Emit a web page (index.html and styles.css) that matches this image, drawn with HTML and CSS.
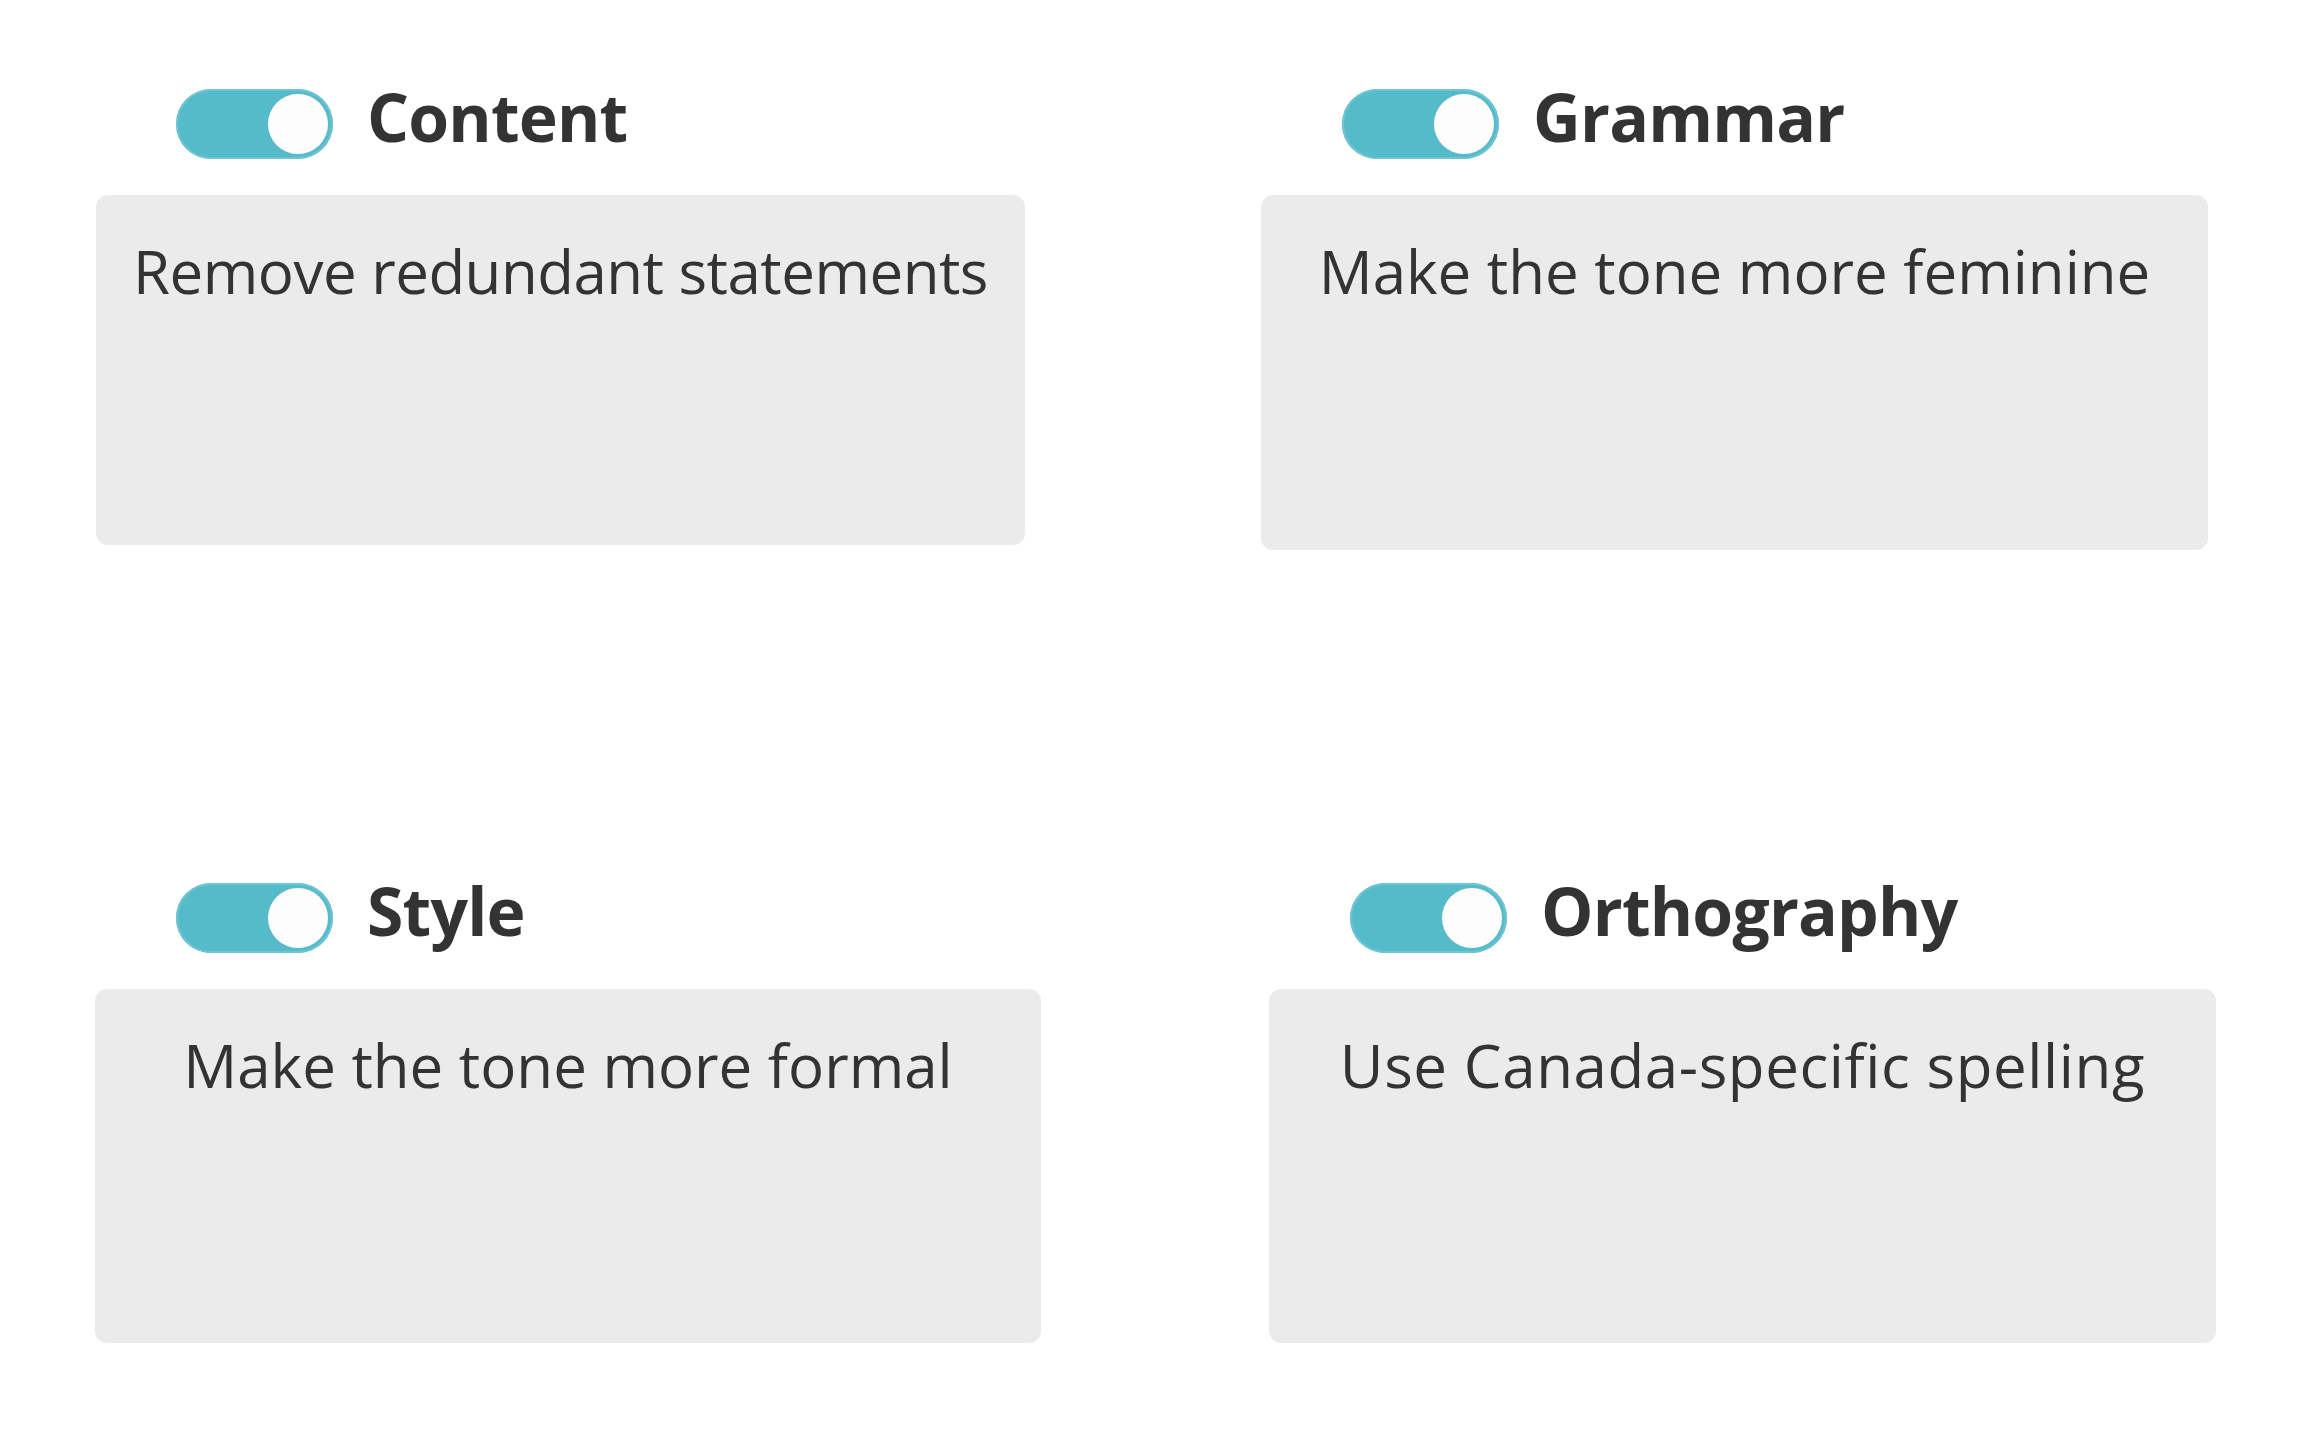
FILE: index.html
```html
<!DOCTYPE html>
<html lang="en">
<head>
<meta charset="utf-8">
<title>Rewrite options</title>
<link rel="stylesheet" href="styles.css">
</head>
<body>
<main class="board">
  <section class="card card--content">
    <header class="card-head">
      <span class="toggle" role="switch" aria-checked="true"><span class="knob"></span></span>
      <h2 class="label">Content</h2>
    </header>
    <div class="prompt">Remove redundant statements</div>
  </section>
  <section class="card card--grammar">
    <header class="card-head">
      <span class="toggle" role="switch" aria-checked="true"><span class="knob"></span></span>
      <h2 class="label">Grammar</h2>
    </header>
    <div class="prompt">Make the tone more feminine</div>
  </section>
  <section class="card card--style">
    <header class="card-head">
      <span class="toggle" role="switch" aria-checked="true"><span class="knob"></span></span>
      <h2 class="label">Style</h2>
    </header>
    <div class="prompt">Make the tone more formal</div>
  </section>
  <section class="card card--ortho">
    <header class="card-head">
      <span class="toggle" role="switch" aria-checked="true"><span class="knob"></span></span>
      <h2 class="label">Orthography</h2>
    </header>
    <div class="prompt">Use Canada-specific spelling</div>
  </section>
</main>
</body>
</html>
```

FILE: styles.css
```css
html, body {
  margin: 0;
  padding: 0;
  background: #ffffff;
}

body {
  width: 2304px;
  height: 1436px;
  overflow: hidden;
  font-family: "Open Sans", "Noto Sans", "Liberation Sans", sans-serif;
  color: #333333;
}

.board {
  display: grid;
  grid-template-columns: 946px 947px;
  column-gap: 224px;
  row-gap: 333px;
  padding: 89px 0 0 95px;
}

.card {
  display: flex;
  flex-direction: column;
}

.card-head {
  display: flex;
  align-items: flex-start;
  gap: 34px;
  padding-left: 81px;
  height: 70px;
}

.toggle {
  flex: none;
  box-sizing: border-box;
  width: 157px;
  height: 70px;
  border-radius: 35px;
  background: #55bbca;
  box-shadow: inset 0 0 0 2px #6ec4d0;
  display: flex;
  align-items: center;
  justify-content: flex-end;
  padding-right: 5px;
}

.knob {
  width: 60px;
  height: 60px;
  border-radius: 50%;
  background: #fdfdfd;
  box-shadow: 0 0 0 1px rgba(120, 190, 200, 0.35);
}

.label {
  margin: 0;
  font-size: 66px;
  font-weight: 700;
  line-height: 54px;
  color: #333333;
  letter-spacing: -0.8px;
}

.prompt {
  margin-top: 36px;
  box-sizing: border-box;
  height: 350px;
  padding-top: 36px;
  background: #ebebeb;
  border-radius: 12px;
  font-size: 60px;
  font-weight: 400;
  line-height: 80px;
  text-align: center;
  color: #333333;
}

.card--content .prompt {
  width: 929px;
  margin-left: 1px;
  letter-spacing: -0.5px;
}

.card--grammar {
  width: 947px;
  margin-left: -4px;
}

.card--grammar .prompt {
  height: 355px;
}

.card--style .prompt,
.card--ortho .prompt {
  height: 354px;
}

.card--ortho {
  width: 947px;
  margin-left: 4px;
}

.card--ortho .prompt {
  letter-spacing: 0.6px;
}
```
